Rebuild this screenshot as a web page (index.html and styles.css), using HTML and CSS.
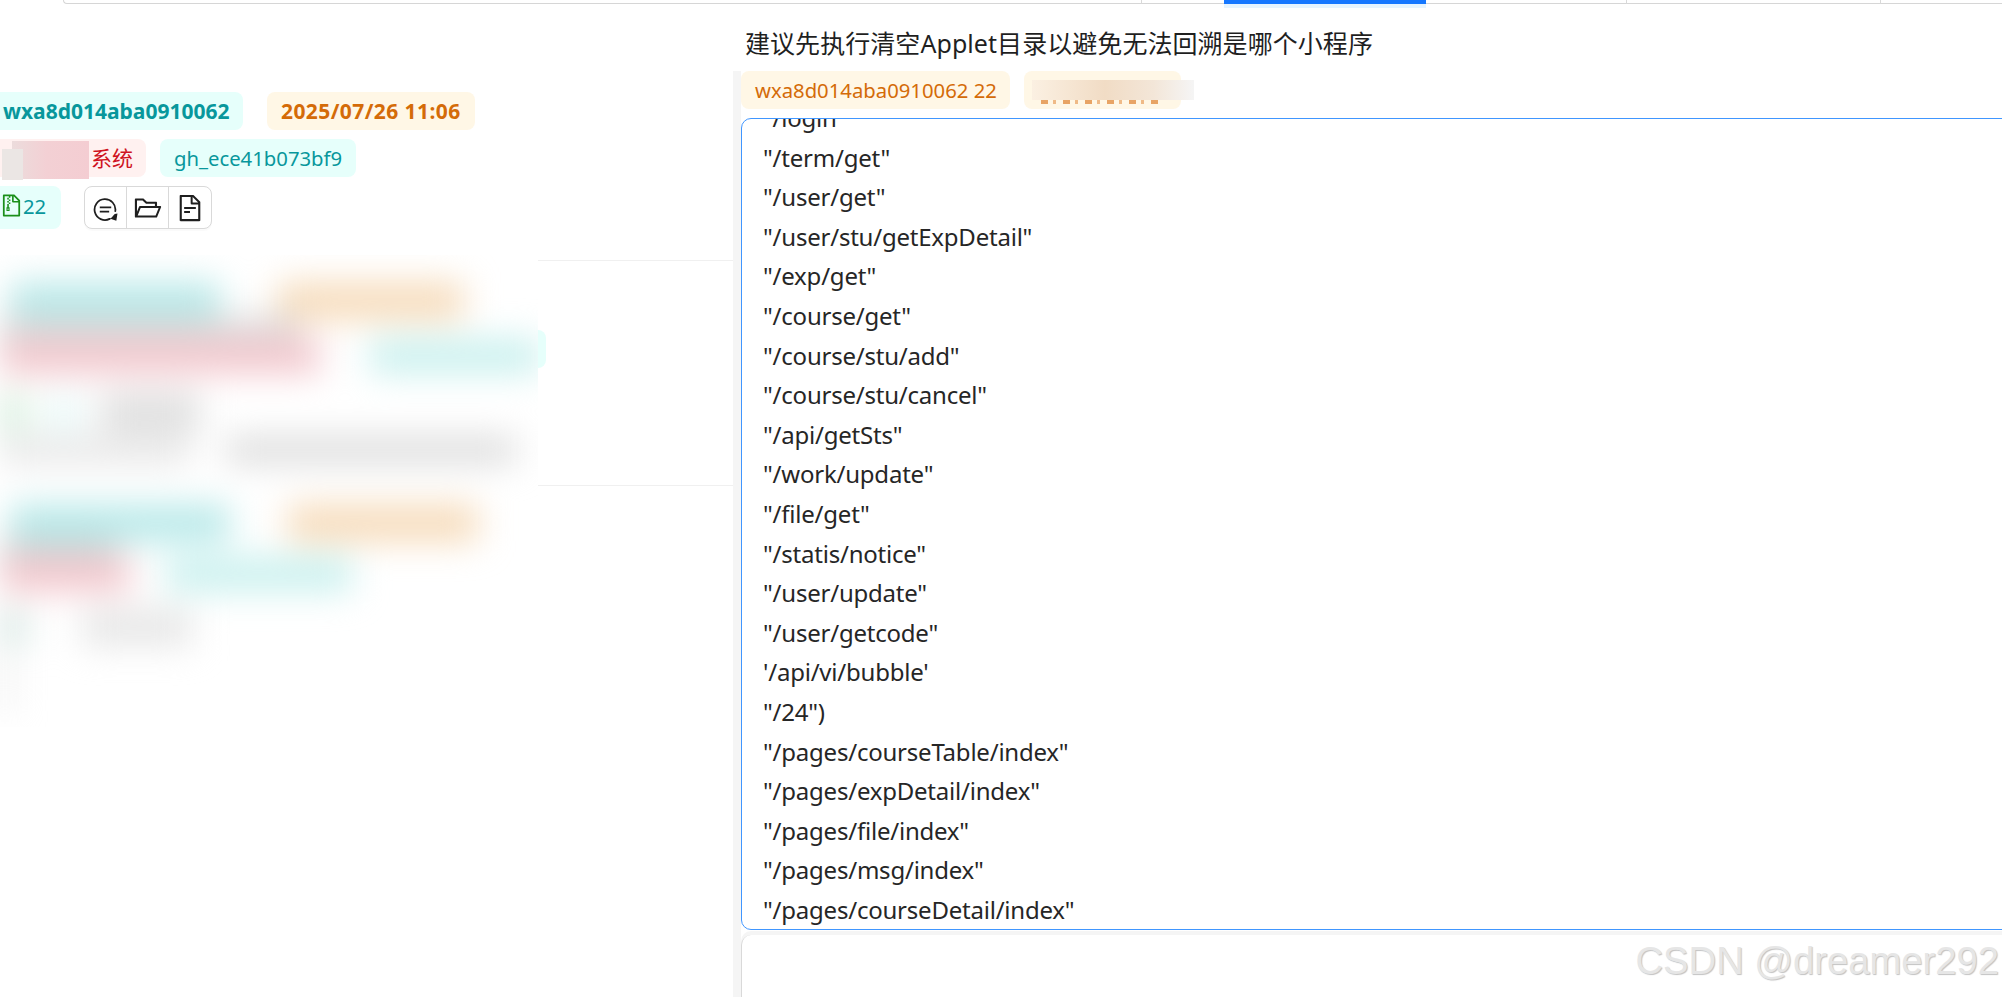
FILE: index.html
```html
<!DOCTYPE html>
<html lang="zh">
<head>
<meta charset="utf-8">
<title>Applet</title>
<link rel="stylesheet" href="styles.css">
</head>
<body>
<div class="page">
  <header class="topbar">
    <div class="seg seg-a"></div>
    <div class="seg seg-b"></div>
    <div class="seg seg-active"></div>
    <div class="seg seg-c"></div>
    <div class="seg seg-d"></div>
    <div class="seg seg-e"></div>
  </header>
  <div class="main">
    <aside class="list">
      <div class="item item-first">
        <div class="row row-wide">
          <span class="tag tag-cyan tag-bold tag-id">wxa8d014aba0910062</span>
          <span class="tag tag-orange tag-bold tag-date">2025/07/26 11:06</span>
        </div>
        <div class="row">
          <span class="tag tag-red tag-name">系统
            <i class="patch patch-pink"></i><i class="patch patch-grey"></i>
          </span>
          <span class="tag tag-cyan">gh_ece41b073bf9</span>
        </div>
        <div class="row row-tools">
          <span class="tag tag-cyan tag-count">
            <svg class="zip" viewBox="0 0 1024 1024" aria-hidden="true"><path fill="#1a8f1a" d="M854.6 288.7 639.4 73.4c-6-6-14.2-9.4-22.7-9.4H192c-17.7 0-32 14.3-32 32v832c0 17.7 14.3 32 32 32h640c17.7 0 32-14.3 32-32V311.3c0-8.5-3.4-16.6-9.4-22.6zM790.2 326H602V137.8L790.2 326zM792 888H232V136h170v62h64v-62h68v216a42 42 0 0 0 42 42h216v494zM402 198h-64v64h64v-64zm64 64h-64v64h64v-64zm-64 64h-64v64h64v-64zm64 64h-64v64h64v-64zm-64 64h-64v64h64v-64zm-64 64v64h-32v160h128V582h-32v-64h-64zm48 112v64h-32v-64h32z"/></svg>22
          </span>
          <div class="btn-group">
            <button class="btn" type="button" aria-label="refresh">
              <svg class="ico ico-refresh" viewBox="0 0 24 24" aria-hidden="true"><path d="M21.4 13.5A10 10 0 1 0 16 21" fill="none" stroke="#1f1f1f" stroke-width="1.7" stroke-linecap="round"/><path d="M6.5 10h11M6.5 14h9" fill="none" stroke="#1f1f1f" stroke-width="1.7"/><path d="M23.5 15.8 22.4 22.8 16 20.6l2-1 1.3-1.6 1.6-1.6z" fill="#1f1f1f"/></svg>
            </button>
            <button class="btn" type="button" aria-label="folder">
              <svg class="ico" viewBox="0 0 1024 1024" aria-hidden="true"><path d="M928 444H820V330.4c0-17.7-14.3-32-32-32H473L355.7 186.2a8.15 8.15 0 0 0-5.5-2.2H96c-17.7 0-32 14.3-32 32v592c0 17.7 14.3 32 32 32h698c13 0 24.8-7.9 29.7-20l134-332c1.5-3.8 2.3-7.9 2.3-12 0-17.7-14.3-32-32-32zM136 256h188.5l119.6 114.4H748V444H238c-13 0-24.8 7.9-29.7 20L136 643.2V256zm635.3 512H159l103.3-256h612.4L771.3 768z"/></svg>
            </button>
            <button class="btn" type="button" aria-label="file">
              <svg class="ico" viewBox="0 0 1024 1024" aria-hidden="true"><path d="M854.6 288.6 639.4 73.4c-6-6-14.1-9.4-22.6-9.4H192c-17.7 0-32 14.3-32 32v832c0 17.7 14.3 32 32 32h640c17.7 0 32-14.3 32-32V311.3c0-8.5-3.4-16.7-9.4-22.7zM790.2 326H602V137.8L790.2 326zm1.8 562H232V136h302v216a42 42 0 0 0 42 42h216v494zM504 618H320c-4.4 0-8 3.6-8 8v48c0 4.4 3.6 8 8 8h184c4.4 0 8-3.6 8-8v-48c0-4.4-3.6-8-8-8zM312 490v48c0 4.4 3.6 8 8 8h384c4.4 0 8-3.6 8-8v-48c0-4.4-3.6-8-8-8H320c-4.4 0-8 3.6-8 8z"/></svg>
            </button>
          </div>
        </div>
      </div>
      <div class="item item-second">
        <span class="tag tag-cyan tag-peek"></span>
      </div>
      <div class="item-last"></div>
      <div class="mosaic" aria-hidden="true">
        <div class="mosaic-inner">
          <div class="blob-row br1"><i class="b cy w210 ml10"></i><i class="b or w185 ml58"></i></div>
          <div class="blob-row br2"><i class="b gr w300"></i></div>
          <div class="blob-row br3"><i class="b pk w320"></i><i class="b cy2 w170 ml50"></i></div>
          <div class="blob-row br4"><i class="b gn w28"></i><i class="b cy3 w24 ml24"></i><i class="b gr2 w100 ml24"></i></div>
          <div class="blob-row br5"><i class="b gr3 w190"></i><i class="b gr w290 ml36"></i></div>
          <div class="blob-row br6"><i class="b cy w220 ml10"></i><i class="b or w190 ml58"></i></div>
          <div class="blob-row br7"><i class="b gr4 w118"></i></div>
          <div class="blob-row br8"><i class="b pk w130"></i><i class="b cy2 w186 ml36"></i></div>
          <div class="blob-row br9"><i class="b gn2 w26"></i><i class="b gr3 w110 ml56"></i></div>
          <div class="blob-row br10"><i class="b gr3 w10"></i></div>
        </div>
      </div>
    </aside>
    <section class="detail">
      <h1 class="title">建议先执行清空Applet目录以避免无法回溯是哪个小程序</h1>
      <div class="workspace">
        <div class="row row-meta">
          <span class="tag tag-orange tag-file">wxa8d014aba0910062 22</span>
          <span class="tag tag-orange tag-name2"><i class="patch patch-sliver"></i><i class="patch patch-cover"></i></span>
        </div>
        <div class="editor">
          <div class="editor-lines">"/login"
"/term/get"
"/user/get"
"/user/stu/getExpDetail"
"/exp/get"
"/course/get"
"/course/stu/add"
"/course/stu/cancel"
"/api/getSts"
"/work/update"
"/file/get"
"/statis/notice"
"/user/update"
"/user/getcode"
'/api/vi/bubble'
"/24")
"/pages/courseTable/index"
"/pages/expDetail/index"
"/pages/file/index"
"/pages/msg/index"
"/pages/courseDetail/index"</div>
        </div>
        <div class="editor-next"></div>
      </div>
      <div class="watermark">CSDN @dreamer292</div>
    </section>
  </div>
</div>
</body>
</html>
```
FILE: styles.css
```css
* { box-sizing: border-box; }
html, body { margin: 0; padding: 0; background: #fff; }
body { font-family: "Noto Sans", "Noto Sans CJK SC", sans-serif; color: #1f1f1f; }
.page { width: 2002px; height: 997px; overflow: hidden; position: relative; }

.topbar { display: flex; height: 8px; padding-left: 63px; }
.seg { height: 4px; border-bottom: 1px solid #d6d6d6; position: relative; }
.seg-a { width: 1078px; border-left: 1px solid #d6d6d6; border-bottom-left-radius: 6px; }
.seg-b { width: 83px; border-left: 1px solid #d9d9d9; box-shadow: 0 4px 4px -2px rgba(0,0,0,.03); }
.seg-active { width: 202px; background: #1677ff; border: 0; box-shadow: 0 4px 0 #e6f4ff; }
.seg-c { width: 200px; box-shadow: 0 4px 4px -2px rgba(0,0,0,.03); }
.seg-d { width: 254px; border-left: 1px solid #d9d9d9; box-shadow: 0 4px 4px -2px rgba(0,0,0,.03); }
.seg-e { flex: 1; border-left: 1px solid #d9d9d9; box-shadow: 0 4px 4px -2px rgba(0,0,0,.03); }

.main { display: flex; height: 989px; }
.list { width: 733px; flex: none; position: relative; }
.item { border-bottom: 1px solid #f0f0f0; }
.item-first { padding: 84px 0 31px; height: 253px; }
.item-second { height: 225px; padding-top: 69px; }
.row { display: flex; align-items: flex-start; gap: 14px; margin: 0 0 9px -11px; }
.row-wide { gap: 24px; }
.row-tools { gap: 23px; }

.tag { display: inline-flex; align-items: center; height: 38px; padding: 0 14px; border-radius: 8px; font-size: 20.3px; line-height: 38px; position: relative; white-space: nowrap; }
.tag-cyan { background: #e6fffb; color: #08979c; }
.tag-orange { background: #fff7e6; color: #d46b08; }
.tag-red { background: #fff1f0; color: #cf1322; }
.tag-bold { font-weight: 700; font-size: 21px; }
.tag-date { letter-spacing: .42px; }
.tag-id { width: 254px; }
.tag-name { width: 157px; justify-content: flex-end; padding-right: 13px; font-size: 21px; }
.tag-count { width: 72px; height: 43px; padding: 0 0 4px 13px; }
.tag-peek { margin-left: 400px; width: 146px; }
.tag-file { width: 269px; }
.tag-name2 { width: 157px; }

.zip { width: 25px; height: 27px; flex: none; margin-left: -3px; margin-right: -1px; }
.patch { position: absolute; display: block; }
.patch-pink { left: 23px; top: 2px; width: 77px; height: 38px; background: linear-gradient(90deg, #ecdcdc, #f3d0d4 45%, #f4cdd2); }
.patch-grey { left: 13px; top: 10px; width: 21px; height: 31px; background: #ebe6e4; }
.patch-cover { left: 8px; top: 9px; width: 162px; height: 20px; background: linear-gradient(90deg, #fbf0e2, #f1dcc5 45%, #f3e6d8 75%, #f5f5f5); }
.patch-sliver { left: 17px; top: 29px; width: 122px; height: 4px; opacity: .75; background: repeating-linear-gradient(90deg, #e0883a 0 7px, transparent 7px 12px, #eaa668 12px 15px, transparent 15px 22px); }

.btn-group { display: flex; height: 43px; background: #fff; border: 1px solid #d9d9d9; border-radius: 8px; box-shadow: 0 2px 0 rgba(0,0,0,.02); }
.btn { width: 42px; flex: none; padding: 0; display: flex; align-items: center; justify-content: center; background: none; border: 0; border-right: 1px solid #d9d9d9; }
.btn:last-child { border-right: 0; }
.ico { width: 30px; height: 30px; fill: #1f1f1f; }
.ico-refresh { width: 25px; height: 25px; margin-top: 3px; }

.mosaic { position: absolute; left: 0; top: 247px; width: 538px; height: 472px; overflow: hidden; background: #fff; }
.mosaic-inner { filter: blur(17px); display: flex; flex-direction: column; }
.blob-row { display: flex; }
.b { display: block; height: 100%; flex: none; }
.br1 { height: 36px; margin-top: 28px; }
.br2 { height: 24px; margin-top: -2px; }
.br3 { height: 34px; margin-top: -2px; }
.br4 { height: 38px; margin-top: 20px; }
.br5 { height: 26px; margin-top: 6px; }
.br6 { height: 36px; margin-top: 42px; }
.br7 { height: 20px; margin-top: 0; }
.br8 { height: 34px; margin-top: -4px; }
.br9 { height: 36px; margin-top: 18px; }
.br10 { height: 60px; margin-top: 6px; }
.w10 { width: 10px; } .w24 { width: 24px; } .w26 { width: 26px; } .w28 { width: 28px; } .w100 { width: 100px; } .w110 { width: 110px; }
.w118 { width: 118px; } .w130 { width: 130px; } .w170 { width: 170px; } .w185 { width: 185px; } .w186 { width: 186px; }
.w190 { width: 190px; } .w210 { width: 210px; } .w220 { width: 220px; } .w290 { width: 290px; } .w300 { width: 300px; } .w320 { width: 320px; }
.ml10 { margin-left: 10px; } .ml24 { margin-left: 24px; } .ml36 { margin-left: 36px; } .ml50 { margin-left: 50px; } .ml56 { margin-left: 56px; } .ml58 { margin-left: 58px; }
.cy { background: #b5e8e8; } .cy2 { background: #c8f0ee; } .cy3 { background: #e2f8f7; }
.or { background: #f6dab8; } .pk { background: #f3c6cc; }
.gr { background: #dadada; } .gr2 { background: #dedede; } .gr3 { background: #e6e6e6; } .gr4 { background: #d4d4d4; }
.gn { background: #d4eedc; } .gn2 { background: #d2e4e0; }

.detail { flex: 1; min-width: 0; display: flex; flex-direction: column; position: relative; }
.title { margin: 0; height: 63px; padding: 16px 0 0 12px; font-size: 25px; letter-spacing: .06px; font-weight: 400; line-height: 38px; white-space: nowrap; }
.workspace { flex: 1; min-height: 0; border-left: 8px solid #f5f5f5; }
.row-meta { margin: 0 0 9px; gap: 14px; }
.editor { height: 812px; margin-right: -20px; border: 1px solid #4096ff; border-radius: 10px; background: #fff; overflow: hidden; }
.editor-lines { margin-top: -21px; padding-left: 21px; font-size: 24px; letter-spacing: -.22px; line-height: 39.6px; white-space: pre; color: #262626; }
.editor-next { height: 80px; margin-right: -20px; border-left: 1px solid #d9d9d9; border-radius: 10px 0 0 0; background: #fff; box-shadow: 0 -4px 0 #f5f5f5; margin-top: 5px; }
.watermark { position: absolute; right: 3px; bottom: 14px; font-family: "Liberation Sans", sans-serif; font-size: 38.2px; line-height: 44px; color: #e6e6e6; text-shadow: 1px 1px 1px #c2c2c2; white-space: nowrap; }
```
